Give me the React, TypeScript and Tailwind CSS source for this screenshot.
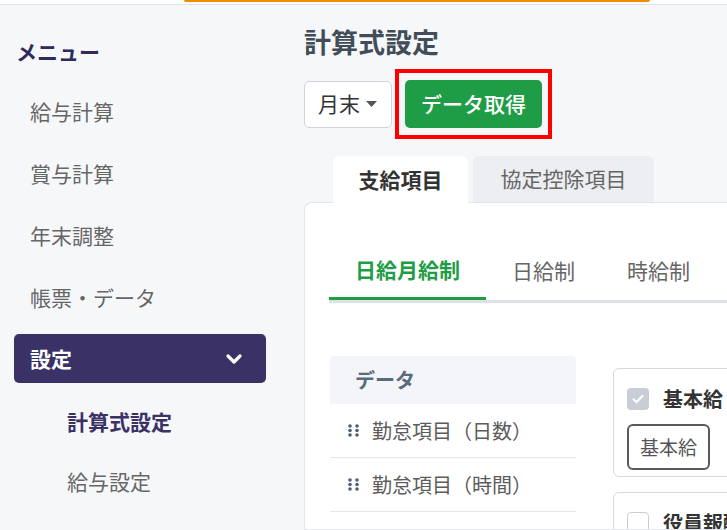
import React from "react";
import { ChevronDown } from "lucide-react";

function Handle() {
  return (
    <svg width="11" height="13" viewBox="0 0 11 13" className="shrink-0">
      {[2, 6.5, 11].map((y) => (
        <g key={y}>
          <circle cx="2" cy={y} r="1.8" fill="#4d5e75" />
          <circle cx="9" cy={y} r="1.8" fill="#4d5e75" />
        </g>
      ))}
    </svg>
  );
}

export default function App() {
  const menu = ["給与計算", "賞与計算", "年末調整", "帳票・データ"];
  return (
    <div className="h-[530px] w-[727px] overflow-hidden bg-[#f6f7f9] flex flex-col font-['Noto_Sans_CJK_JP','Noto_Sans',sans-serif]">
      <div className="h-[5px] shrink-0 bg-white border-b border-[#dfe2e6]">
        <div className="ml-[184px] w-[466px] h-[2px] bg-[#f28c00] rounded-b-[2px]" />
      </div>
      <div className="flex flex-1 min-h-0">
        {/* Sidebar */}
        <div className="w-[304px] shrink-0 pl-[14px]">
          <div className="mt-[32px] h-[30px] flex items-center pl-[2px] text-[21px] font-bold text-[#2f2a5c]">
            メニュー
          </div>
          <div className="mt-[14px]">
            {menu.map((m) => (
              <div key={m} className="h-[62px] flex items-center pl-[16px] text-[21px] text-[#666]">
                {m}
              </div>
            ))}
          </div>
          <div className="mt-[5px] w-[252px] h-[49px] rounded-[5px] bg-[#3a3166] flex items-center justify-between pl-[16px] pr-[20px]">
            <span className="text-[21px] font-bold text-white">設定</span>
            <ChevronDown size={24} strokeWidth={3.2} color="#fff" />
          </div>
          <div className="mt-[9px]">
            <div className="h-[60px] flex items-center pl-[53px] text-[21px] font-bold text-[#3a3166]">計算式設定</div>
            <div className="h-[60px] flex items-center pl-[53px] text-[21px] text-[#666]">給与設定</div>
          </div>
        </div>

        {/* Main */}
        <div className="flex-1 min-w-0 flex flex-col">
          <div className="mt-[17px] h-[40px] flex items-center text-[27px] font-bold text-[#414d58]">計算式設定</div>
          <div className="mt-[7px] flex items-center gap-[3px]">
            <div className="w-[88px] h-[47px] bg-white border border-[#cfd4da] rounded-[5px] flex items-center pl-[13px] gap-[6px] text-[21px] text-[#333]">
              <span>月末</span>
              <svg width="11" height="6" viewBox="0 0 11 6">
                <path d="M0 0h11L5.5 6z" fill="#555" />
              </svg>
            </div>
            <div className="w-[157px] h-[70px] border-[4px] border-[#ff0000] pl-[6px] pt-[7px]">
              <div className="w-[137px] h-[48px] rounded-[5px] bg-[#1f9d46] flex items-center justify-center text-[21px] font-medium text-white">
                データ取得
              </div>
            </div>
          </div>

          <div className="mt-[17px] ml-[29px] flex gap-[5px] relative z-10">
            <div className="w-[135px] h-[47px] -mb-px bg-white rounded-t-[6px] flex items-center justify-center text-[21px] font-bold text-[#333]">
              支給項目
            </div>
            <div className="w-[181px] h-[46px] bg-[#eceef1] rounded-t-[6px] flex items-center justify-center text-[21px] text-[#666]">
              協定控除項目
            </div>
          </div>

          <div className="flex-1 bg-white border border-r-0 border-[#e3e6ea] rounded-tl-[8px] pt-[39px] pl-[24px] overflow-hidden">
            <div className="flex border-b-[3px] border-[#dee2e6]">
              <div className="h-[58px] -mb-[3px] border-b-[3px] border-[#1f9d46] px-[26px] flex items-center text-[21px] font-bold text-[#1f9d46]">
                日給月給制
              </div>
              <div className="h-[58px] px-[26px] flex items-center text-[21px] text-[#666]">日給制</div>
              <div className="h-[58px] px-[26px] flex items-center text-[21px] text-[#666]">時給制</div>
            </div>

            <div className="mt-[53px] flex gap-[37px]">
              <div className="w-[246px] ml-[1px] shrink-0">
                <div className="h-[48px] bg-[#f3f5f8] rounded-t-[4px] flex items-center pl-[25px] text-[20px] font-bold text-[#5b6b7c]">
                  データ
                </div>
                {["勤怠項目（日数）", "勤怠項目（時間）", "勤怠項目（回数）"].map((t) => (
                  <div key={t} className="h-[54px] border-b border-[#e3e6ea] flex items-center pl-[18px] gap-[13px] text-[20px] text-[#5c5c5c]">
                    <Handle />
                    <span>{t}</span>
                  </div>
                ))}
              </div>

              <div className="mt-[12px] shrink-0">
                <div className="w-[220px] h-[109px] border-[1.5px] border-[#d5d9df] rounded-[6px] pt-[15px] pl-[13px]">
                  <div className="flex items-center gap-[14px]">
                    <div className="w-[22px] h-[22px] rounded-[4px] bg-[#c9ced6] flex items-center justify-center">
                      <svg width="12" height="10" viewBox="0 0 12 10">
                        <path d="M1.5 5.2l3 3 6-6.5" stroke="#fff" strokeWidth="2" fill="none" strokeLinecap="round" strokeLinejoin="round" />
                      </svg>
                    </div>
                    <span className="text-[20px] font-bold text-[#333]">基本給</span>
                  </div>
                  <div className="mt-[10px] w-[83px] h-[46px] border-2 border-[#5a5a5a] rounded-[6px] flex items-center justify-center text-[19px] text-[#555]">
                    基本給
                  </div>
                </div>
                <div className="mt-[15px] w-[220px] h-[109px] border-[1.5px] border-[#d5d9df] rounded-[6px] pt-[15px] pl-[13px]">
                  <div className="flex items-center gap-[14px]">
                    <div className="w-[22px] h-[22px] rounded-[4px] bg-white border border-[#c9ced6]" />
                    <span className="text-[20px] font-bold text-[#333]">役員報酬</span>
                  </div>
                </div>
              </div>
            </div>
          </div>
        </div>
      </div>
    </div>
  );
}
